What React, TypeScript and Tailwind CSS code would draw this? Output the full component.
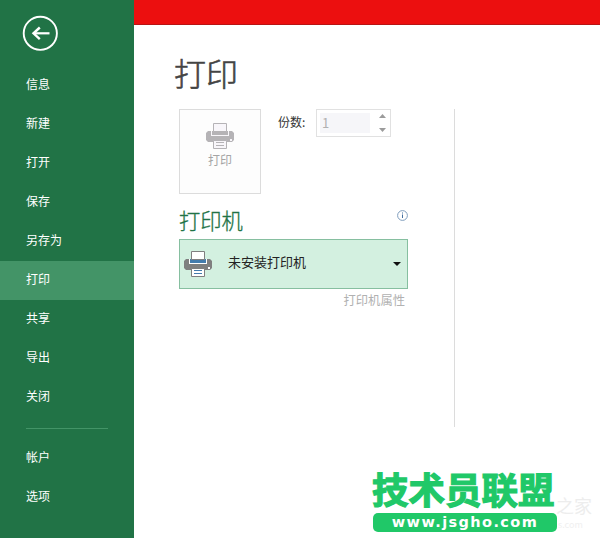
import clsx from 'clsx'

const mainItems = ['信息', '新建', '打开', '保存', '另存为', '打印', '共享', '导出', '关闭']
const footItems = ['帐户', '选项']

function MenuItem({ label, active }: { label: string; active?: boolean }) {
  return (
    <li
      className={clsx(
        'flex h-[39px] items-center pb-[3px] pl-[26px] text-[12px] leading-none text-white',
        active && 'bg-[#439467]'
      )}
    >
      {label}
    </li>
  )
}

function Sidebar() {
  return (
    <nav className="flex w-[134px] shrink-0 flex-col bg-[#217346]">
      <div className="h-[66px] pt-[15px] pl-[22px]">
        <svg width="36" height="36" viewBox="0 0 36 36" fill="none" stroke="#fff">
          <circle cx="18.3" cy="18.3" r="16.6" strokeWidth="1.9" />
          <path d="M27.5 18.3H12" strokeWidth="2.2" />
          <path d="M17.800 12.500 11.500 18.3l6.300 5.800" strokeWidth="2.4" />
        </svg>
      </div>
      <ul>
        {mainItems.map((label) => (
          <MenuItem key={label} label={label} active={label === '打印'} />
        ))}
      </ul>
      <hr className="mt-[11px] mb-[10px] ml-[26px] w-[82px] border-[#439467]" />
      <ul>
        {footItems.map((label) => (
          <MenuItem key={label} label={label} />
        ))}
      </ul>
    </nav>
  )
}

function Printer({ body, paper, band, edge, line }: Record<string, string>) {
  return (
    <svg width="28" height="26" viewBox="0 0 28 26">
      <path d="M2 8h24l2 2v7l-2 2H2l-2-2v-7z" fill={body} />
      <path d="M5 8h18v5H5z" fill={paper} />
      <path d="M6 8h16v4H6z" fill={band} />
      <path d="M7.500.5h13v8h-13z" fill={paper} stroke={edge} />
      <path d="M7.500 17.500h13v8h-13z" fill={paper} stroke={edge} />
      <path d="M10 19.500h8M10 22.500h8" stroke={line} />
      <path d="M24 16h2v2h-2z" fill={paper} />
    </svg>
  )
}

function Copies() {
  return (
    <div className="flex h-7 items-center">
      <span className="w-[38px] pb-[3px] text-[12px] leading-none whitespace-nowrap text-[#333]">份数:</span>
      <div className="flex h-7 w-[75px] border border-[#e1e1e1] p-[3px]">
        <div className="flex w-[50px] items-center bg-[#f6f6f9] pb-px pl-[2px] text-[13px] leading-none text-[#b1b1b1]">
          1
        </div>
        <svg className="ml-[9px]" width="8" height="20" viewBox="0 0 8 20" fill="#9b9b9b">
          <path d="M0 5h7L3.500 1zM0 15h7l-3.500 4z" />
        </svg>
      </div>
    </div>
  )
}

function PrintPanel() {
  return (
    <div className="w-[229px]">
      <div className="flex">
        <button className="flex h-[85px] w-[82px] flex-col items-center border border-[#dcdcdc] bg-[#fdfdfd] pt-[13px] text-[12px] leading-none text-[#a5a5a5]">
          <Printer body="#b5b3b6" paper="#f8f6fa" band="#b5b3b6" edge="#b5b3b6" line="#b5b3b6" />
          <span className="mt-[5px]">打印</span>
        </button>
        <div className="ml-[17px]">
          <Copies />
        </div>
      </div>
      <div className="mt-[13px] flex h-[32px] justify-between">
        <h2 className="-mt-[2px] text-[21.300px] leading-[30px] font-light text-[#217346] [-webkit-text-stroke:0.3px_#217346]">
          打印机
        </h2>
        <svg className="mt-[3px]" width="11" height="11" viewBox="0 0 11 11" fill="none">
          <circle cx="5.500" cy="5.500" r="4.900" stroke="#7f9dbd" strokeWidth="1" />
          <path d="M5 2.500h1v1H5zM5 4.500h1V8H5z" fill="#436f9f" />
        </svg>
      </div>
      <button className="flex h-[50px] w-full items-center border border-[#86bfa0] bg-[#d3f0e0] pl-[4px] text-[13px] leading-none text-[#222]">
        <Printer body="#7f7f7f" paper="#fff" band="#447cad" edge="#7f7f7f" line="#447cad" />
        <span className="-mt-[6px] ml-[16px]">未安装打印机</span>
        <svg className="mr-[6px] ml-auto" width="8" height="4" viewBox="0 0 8 4" fill="#111">
          <path d="M0 0h8L4 4z" />
        </svg>
      </button>
      <p className="mt-[4px] mr-[3px] text-right text-[12.300px] leading-[14px] text-[#b1b1b1]">打印机属性</p>
    </div>
  )
}

function Watermark() {
  return (
    <div className="absolute top-[467px] left-[372px] w-[228px]">
      <div className="absolute top-[24px] left-[184px] text-[18px] leading-[28px] whitespace-nowrap text-[#ededed]">
        之家
      </div>
      <div className="absolute top-[52px] left-[186px] text-[9px] leading-[12px] whitespace-nowrap text-[#f0f0f0]">
        s.com
      </div>
      <div className="relative h-[46px] text-[36.500px] leading-[43px] font-bold whitespace-nowrap text-[#20c868] [-webkit-text-stroke:1.2px_#20c868]">
        技术员联盟
      </div>
      <div className="relative ml-px flex h-[19px] w-[184px] items-center justify-center rounded-[5px] bg-[#20c868] pb-[1px] font-['DejaVu_Sans'] text-[14.500px] leading-none font-bold text-white">
        <span className="tracking-[1.4px]">www.jsgho.com</span>
      </div>
    </div>
  )
}

export default function App() {
  return (
    <div className="relative flex h-[538px] w-[600px] overflow-hidden bg-white font-['Noto_Sans_CJK_SC',sans-serif]">
      <Sidebar />
      <main className="flex-1">
        <div className="h-[25px] border-b border-[#b81414] bg-[#ec0f0f]" />
        <h1 className="mt-[23px] ml-[40px] h-[61px] text-[32px] leading-[48px] font-light text-[#444] [-webkit-text-stroke:0.6px_#444]">
          打印
        </h1>
        <div className="ml-[45px] flex">
          <PrintPanel />
          <div className="ml-[46px] h-[318px] w-px bg-[#dcdcdc]" />
        </div>
      </main>
      <Watermark />
    </div>
  )
}
